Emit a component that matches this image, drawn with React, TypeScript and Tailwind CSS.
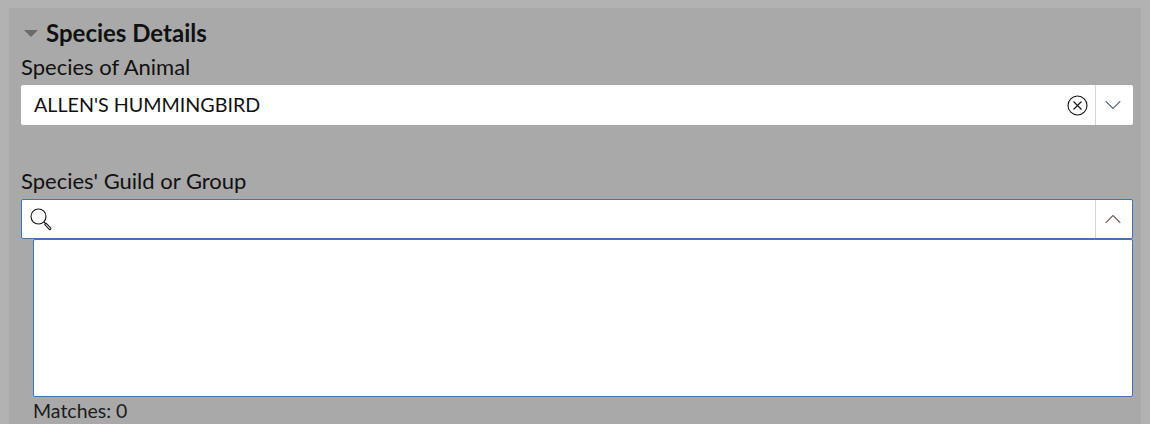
import { ChevronDown, ChevronUp } from 'lucide-react'

function ClearIcon() {
  return (
    <svg width="21" height="21" viewBox="0 0 21 21" fill="none" stroke="#151515" strokeWidth="1.1">
      <circle cx="10.5" cy="10.5" r="9.5" />
      <path d="M6.5 6.5l8 8M14.5 6.5l-8 8" />
    </svg>
  )
}

function SearchIcon() {
  return (
    <svg width="24" height="24" viewBox="0 0 24 24" fill="none" stroke="#151515" strokeWidth="1.1">
      <circle cx="9.5" cy="9.5" r="7.5" />
      <path d="M15 15l2 2" />
      <path d="M17 16.2l4.6 4.6a1 1 0 0 1-1.6 1.4L15.800 17.600z" fill="#ffffff" />
    </svg>
  )
}

export default function App() {
  return (
    <div className="h-[424px] w-[1150px] overflow-hidden bg-[#b2b2b2] px-[9px] pt-[8px] font-['Lato',sans-serif] text-[#111111]">
      <div className="h-[416px] w-[1132px] bg-[#a9a9a9] px-[12px]">
        <div className="flex h-[50px] items-center">
          <span className="ml-[3px] mr-[8px] h-0 w-0 border-x-[7px] border-t-[7px] border-x-transparent border-t-[#6b6b6b]" />
          <h2 className="text-[24px] font-bold leading-none">Species Details</h2>
        </div>
        <label className="block h-[27px] text-[22px] leading-[18px]">Species of Animal</label>

        <div className="flex h-[40px] w-[1112px] items-center rounded-[2px] bg-white">
          <span className="flex-1 pl-[13px] text-[19.700px]">ALLEN'S HUMMINGBIRD</span>
          <span className="mr-[7px] flex">
            <ClearIcon />
          </span>
          <span className="flex h-full w-[38px] items-center justify-center border-l border-[#d4d4d4] pr-[3px]">
            <ChevronDown size={28} strokeWidth={0.9} color="#1f3f66" />
          </span>
        </div>

        <label className="mt-[43px] block h-[31px] text-[22px] leading-[26px]">Species' Guild or Group</label>

        <div className="flex h-[40px] w-[1112px] items-center rounded-[2px] border border-[#3f74bd] bg-white">
          <span className="flex flex-1 pl-[7px]">
            <SearchIcon />
          </span>
          <span className="flex h-full w-[37px] items-center justify-center border-l border-[#d4d4d4] pr-[3px]">
            <ChevronUp size={28} strokeWidth={0.9} color="#4a3020" />
          </span>
        </div>

        <div className="ml-[12px] h-[158px] w-[1100px] rounded-[2px] border border-[#3f74bd] bg-white" />
        <p className="ml-[12px] mt-[4px] text-[19.500px] leading-[20px] text-[#1c1c1c]">Matches: 0</p>
      </div>
    </div>
  )
}
